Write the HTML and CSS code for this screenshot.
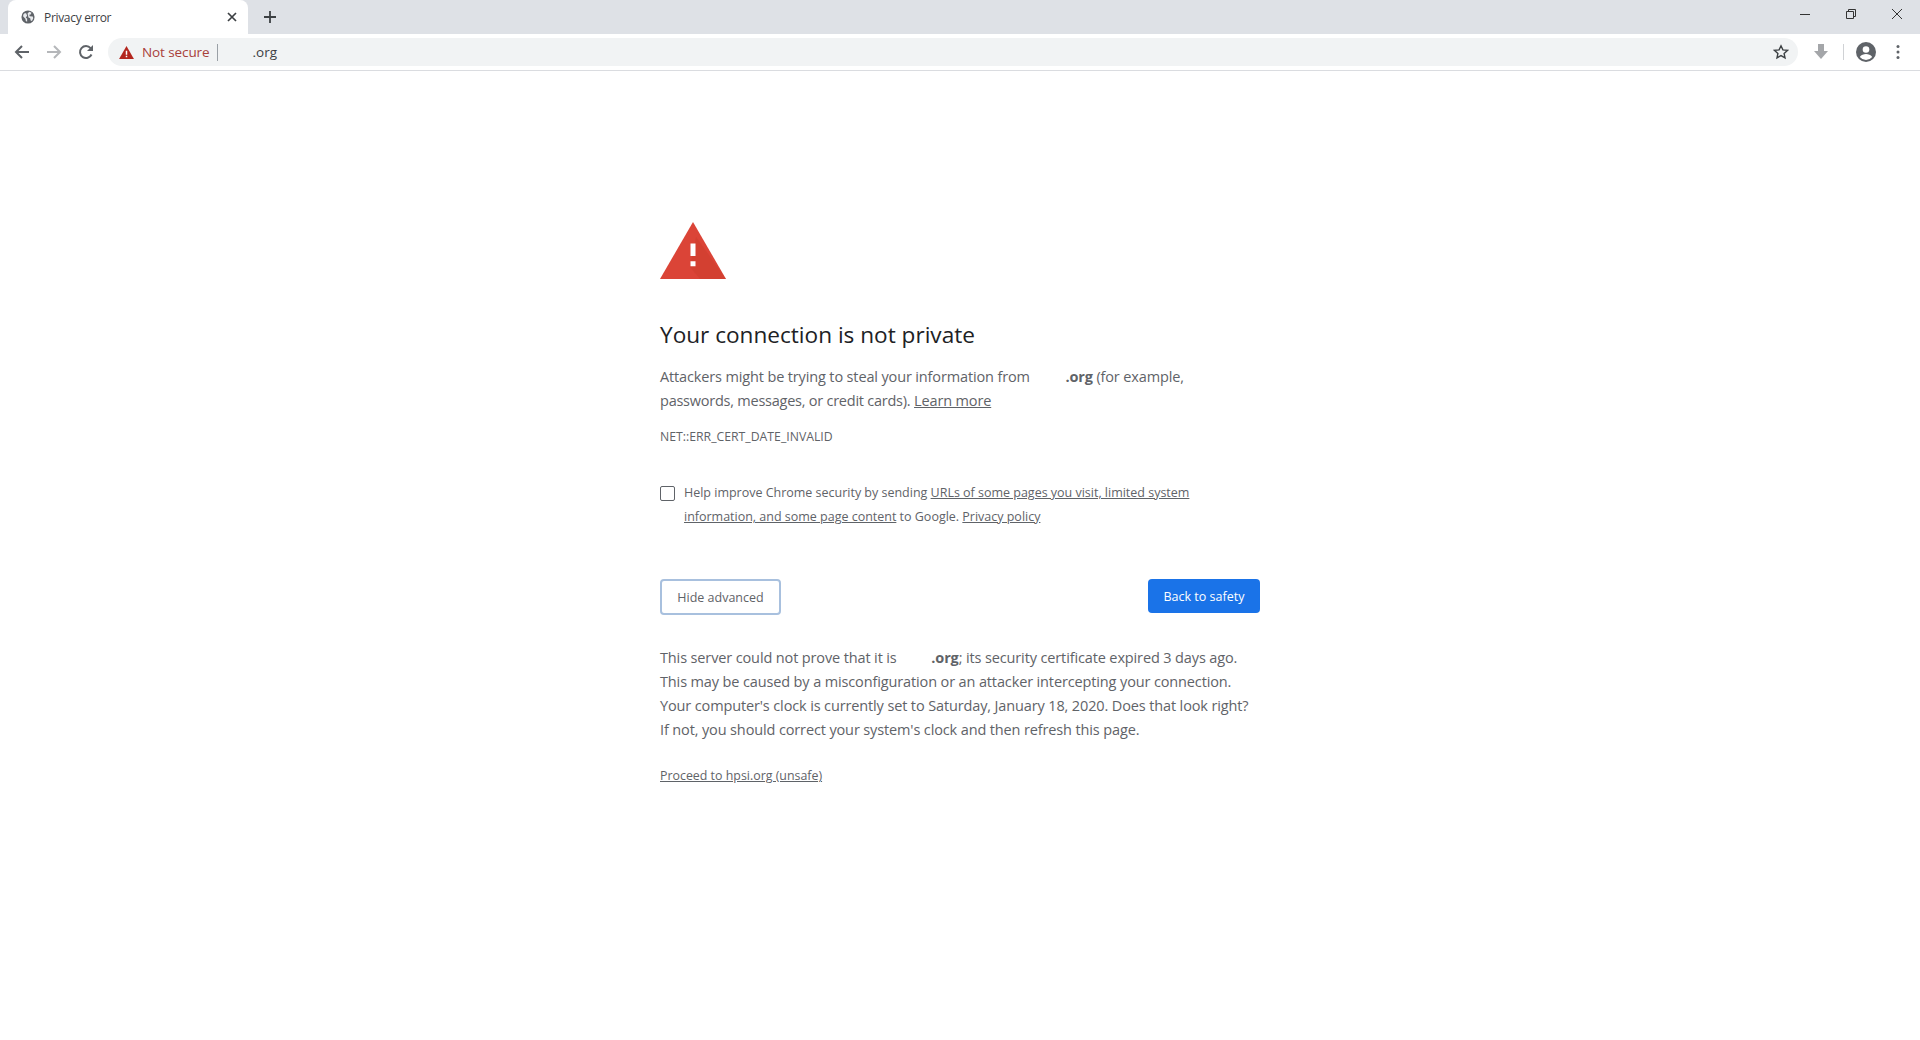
FILE: index.html
```html
<!DOCTYPE html>
<html lang="en">
<head>
<meta charset="utf-8">
<title>Privacy error</title>
<link rel="stylesheet" href="styles.css">
</head>
<body>
<header class="chrome">
  <div class="tabstrip">
    <div class="tab">
      <svg class="favicon" viewBox="0 0 16 16"><circle cx="8" cy="8" r="7.500" fill="#5f6368"/><path d="M2.500 5.500l2-2 1.500.5 1 2.500-1.500 2 1.500 1.500v3.500L5.500 12.500 5 10 2.500 7.500zM9.500 2l2.500 1-1 2.200-1.500.3.500 1.500 3.500.5.500 2-1.500 3-1.500-.5-.5-2.500-2-1-.5-2.500L7.500 4z" fill="#e8eaed"/></svg>
      <span class="tab-title">Privacy error</span>
      <svg class="tab-close" viewBox="0 0 10 10"><path d="M1 1l8 8M9 1l-8 8" stroke="#3c4043" stroke-width="1.700" fill="none"/></svg>
    </div>
    <svg class="new-tab" viewBox="0 0 12 12"><path d="M6 0v12M0 6h12" stroke="#3c4043" stroke-width="1.800" fill="none"/></svg>
    <div class="window-controls">
      <svg class="win-icon" viewBox="0 0 12 12"><path d="M1 6.500h10" stroke="#333" stroke-width="1" fill="none"/></svg>
      <svg class="win-icon" viewBox="0 0 12 12"><path d="M1.500 3.500h7v7h-7zM3.500 3.500v-2h7v7h-2" stroke="#333" stroke-width="1" fill="none"/></svg>
      <svg class="win-icon" viewBox="0 0 12 12"><path d="M1 1l10 10M11 1l-10 10" stroke="#333" stroke-width="1" fill="none"/></svg>
    </div>
  </div>
  <div class="toolbar">
    <svg class="nav-icon" viewBox="0 0 16 16"><path d="M15 8H2M8 2L2 8l6 6" stroke="#5f6368" stroke-width="2" fill="none"/></svg>
    <svg class="nav-icon" viewBox="0 0 16 16"><path d="M1 8h13M8 2l6 6-6 6" stroke="#b5b7ba" stroke-width="2" fill="none"/></svg>
    <svg class="nav-icon" viewBox="0 0 16 16"><path d="M13.500 10.500A6 6 0 1 1 12.600 4.200" stroke="#5f6368" stroke-width="2" fill="none"/><path d="M15 1v6H9z" fill="#5f6368"/></svg>
    <div class="omnibox">
      <svg class="warn-small" viewBox="0 0 16 14"><path d="M8 0l8 14H0z" fill="#b3261e"/><path d="M7.200 5h1.600v4.500H7.200zM7.200 10.500h1.600V12H7.200z" fill="#fff"/></svg>
      <span class="not-secure">Not secure</span>
      <span class="divider"></span>
      <span class="url">.org</span>
      <svg class="star" viewBox="0 0 16 16"><path d="M8 1.800l1.900 4.100 4.500.5-3.300 3 .9 4.400L8 11.600l-4 2.200.9-4.400-3.300-3 4.500-.5z" stroke="#3c4043" stroke-width="1.400" fill="none"/></svg>
    </div>
    <svg class="download" viewBox="0 0 16 18"><path d="M5 1h6v7h4l-7 8-7-8h4z" fill="#a4a6a9"/></svg>
    <span class="tool-sep"></span>
    <svg class="avatar" viewBox="0 0 20 20"><circle cx="10" cy="10" r="10" fill="#5f6368"/><circle cx="10" cy="7.500" r="3.300" fill="#fff"/><path d="M3.800 15c1.400-2.200 3.900-3 6.200-3s4.800.8 6.200 3a8 8 0 0 1-12.400 0z" fill="#fff"/></svg>
    <svg class="menu" viewBox="0 0 4 16"><circle cx="2" cy="2.500" r="1.500" fill="#5f6368"/><circle cx="2" cy="8" r="1.500" fill="#5f6368"/><circle cx="2" cy="13.500" r="1.500" fill="#5f6368"/></svg>
  </div>
</header>
<main class="interstitial">
  <svg class="error-icon" viewBox="0 0 66 58" preserveAspectRatio="none">
    <path d="M33 0l33 58H0z" fill="#db4437"/>
    <path d="M36 15l30 43H40l-10-12z" fill="#c53929" opacity=".35"/>
    <path d="M30.500 22h5v12.500h-5zM30.500 40h5v5h-5z" fill="#fff"/>
  </svg>
  <h1 class="headline">Your connection is not private</h1>
  <p class="body-text">Attackers might be trying to steal your information from <span class="redacted-a"></span><strong>.org</strong> (for example,<br><span class="tight">passwords, messages, or credit cards).</span> <a href="#" class="link">Learn more</a></p>
  <p class="error-code">NET::ERR_CERT_DATE_INVALID</p>
  <div class="opt-in">
    <span class="checkbox"></span>
    <p class="opt-text">Help improve Chrome security by sending <a href="#" class="link">URLs of some pages you visit, limited system</a><br><a href="#" class="link">information, and some page content</a> to Google. <a href="#" class="link">Privacy policy</a></p>
  </div>
  <div class="actions">
    <button class="btn-secondary">Hide advanced</button>
    <button class="btn-primary">Back to safety</button>
  </div>
  <p class="details">This server could not prove that it is <span class="redacted-b"></span><strong>.org</strong>; its security certificate expired 3 days ago.<br>This may be caused by a misconfiguration or an attacker intercepting your connection.<br>Your computer's clock is currently set to Saturday, January 18, 2020. Does that look right?<br>If not, you should correct your system's clock and then refresh this page.</p>
  <a href="#" class="link proceed">Proceed to hpsi.org (unsafe)</a>
</main>
</body>
</html>
```
FILE: styles.css
```css
* { box-sizing: border-box; }
html, body { margin: 0; height: 100%; }
body { background: #fff; font-family: "Open Sans", "Noto Sans", sans-serif; color: #5f6368; overflow: hidden; }
svg { display: block; flex: none; }

.tabstrip { height: 34px; background: #dee1e6; display: flex; align-items: center; padding-left: 8px; }
.tab { width: 240px; height: 34px; background: #fff; border-radius: 8px 8px 0 0; display: flex; align-items: center; padding: 0 11px 0 13px; }
.favicon { width: 14px; height: 14px; }
.tab-title { font-size: 12px; letter-spacing: -.32px; color: #3c4043; margin-left: 9px; flex: 1; }
.tab-close { width: 10px; height: 10px; }
.new-tab { width: 12px; height: 12px; margin-left: 16px; }
.window-controls { margin-left: auto; display: flex; gap: 34px; padding-right: 17px; margin-top: -6px; }
.win-icon { width: 12px; height: 12px; }

.toolbar { height: 37px; background: #fff; border-bottom: 1px solid #dadce0; display: flex; align-items: center; padding-left: 14px; }
.nav-icon { width: 16px; height: 16px; margin-right: 16px; }
.omnibox { height: 28px; width: 1690px; margin-left: -2px; background: #f1f3f4; border-radius: 14px; display: flex; align-items: center; padding: 0 9px 0 11px; }
.warn-small { width: 15px; height: 13px; }
.not-secure { font-size: 13.500px; color: #a8403a; margin-left: 8px; letter-spacing: -.1px; }
.divider { width: 1px; height: 17px; background: #9aa0a6; margin-left: 8px; }
.url { font-size: 13.500px; color: #3c4043; margin-left: 34px; }
.star { width: 16px; height: 16px; margin-left: auto; }
.download { width: 16px; height: 18px; margin-left: 15px; }
.tool-sep { width: 1px; height: 16px; background: #d0d2d5; margin-left: 14px; }
.avatar { width: 20px; height: 20px; margin-left: 12px; }
.menu { width: 4px; height: 16px; margin-left: 20px; }

.interstitial { width: 600px; margin: 151px 0 0 660px; display: flex; flex-direction: column; align-items: stretch; }
.error-icon { width: 66px; height: 57px; }
.headline { font-size: 22.600px; font-weight: 400; line-height: 30px; color: #202124; margin: 41px 0 0; }
.body-text { font-size: 14.500px; line-height: 24px; margin: 15px 0 0; width: 550px; letter-spacing: -.14px; }
.body-text strong, .details strong { font-weight: 700; }
.tight { letter-spacing: -.24px; }
.redacted-a { display: inline-block; width: 32px; }
.redacted-b { display: inline-block; width: 31px; }
.link { color: #5f6368; text-decoration: underline; }
.error-code { font-size: 12.250px; line-height: 16px; margin: 16px 0 0; }
.opt-in { display: flex; margin-top: 36px; align-items: flex-start; }
.checkbox { width: 15px; height: 15px; border: 1px solid #5f6368; border-radius: 2px; margin: 5px 9px 0 0; flex: none; }
.opt-text { font-size: 12.500px; line-height: 24px; margin: 0; width: 530px; letter-spacing: -.01px; }
.actions { display: flex; justify-content: space-between; align-items: flex-start; margin-top: 50px; }
.btn-secondary { width: 121px; height: 36px; border: 2px solid #a8c0de; border-radius: 4px; background: #fff; color: #5f6368; font: 400 12.500px "Open Sans", sans-serif; padding: 0; }
.btn-primary { width: 112px; height: 34px; border: 0; border-radius: 4px; background: #1a73e8; color: #fff; font: 400 12.500px "Open Sans", sans-serif; padding: 0; }
.details { font-size: 14.500px; line-height: 24px; margin: 31px 0 0; white-space: nowrap; letter-spacing: -.13px; }
.proceed { font-size: 12.400px; line-height: 16px; margin-top: 26px; align-self: flex-start; }
```
